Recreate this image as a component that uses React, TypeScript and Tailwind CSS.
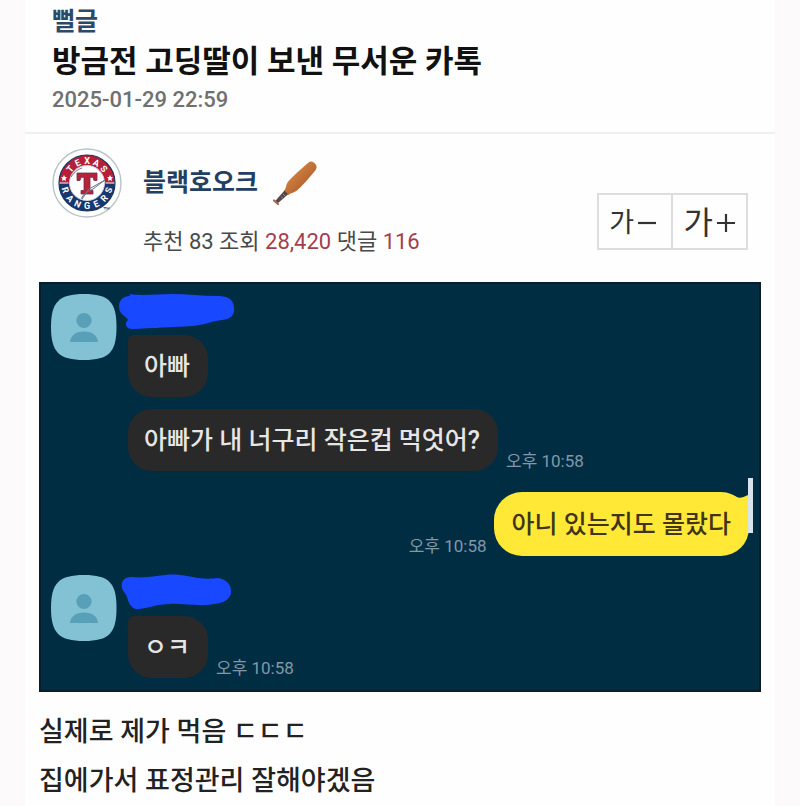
import { ReactNode } from "react";

// Start angle, angle between letters and baseline of each half of the ring
const ringText = [
	{ word: "TEXAS", from: -50, step: 25, y: 16 },
	{ word: "RANGERS", from: 72, step: -24, y: 61 },
];

const TeamLogo = () => (
	<svg viewBox="0 0 70 70" className="size-[70px]" aria-hidden="true">
		<circle cx="35" cy="35" r="34" fill="#fff" stroke="#b9c4c6" strokeWidth="1.4" />
		<path d="M7 35a28 28 0 0 1 56 0z" fill="#b71f38" />
		<path d="M7 35a28 28 0 0 0 56 0z" fill="#16386f" />
		<circle cx="35" cy="35" r="28" fill="none" stroke="#17335f" strokeWidth="1.2" />
		<circle cx="35" cy="35" r="17.5" fill="#fff" stroke="#cbd3df" strokeWidth="1" />
		<path d="M7.500 35h9M53.500 35h9" stroke="#fff" strokeWidth="1" />
		<path
			d="M12 27l1 2 2 .2-1.500 1.500.4 2.200-1.900-1-1.900 1 .4-2.200L9 29.200l2-.2zM58 27l1 2 2 .2-1.500 1.500.4 2.200-1.900-1-1.900 1 .4-2.200-1.500-1.500 2-.2z"
			fill="#fff"
		/>
		{ringText.map(({ word, from, step, y }) =>
			word.split("").map((letter, idx) => (
				<text
					key={`${word}_${idx}`}
					x="35"
					y={y}
					textAnchor="middle"
					fill="#fff"
					className="font-['Roboto',sans-serif] text-[9px] font-bold"
					transform={`rotate(${from + idx * step} 35 35)`}
				>
					{letter}
				</text>
			))
		)}
		<path
			d="M25 25h20v7.500h-3l-1-3.200h-3v13.200h3V46H29v-3.500h3V29.300h-3l-1 3.200h-3z"
			fill="#b3243b"
			stroke="#7c2744"
			strokeWidth=".8"
		/>
		<path
			d="M19 29c4-6 8-8 11-9M30 49l7-8 16-9-12 9-6 3-5 7z"
			fill="none"
			stroke="#65748a"
			strokeWidth="1"
		/>
		<path d="M51.500 59.500h3M53 59.500v2M55 61.500v-2l1 1 1-1v2" fill="none" stroke="#16386f" strokeWidth=".7" />
	</svg>
);

const Bat = () => (
	<svg viewBox="0 0 46 46" className="size-[46px]" aria-hidden="true">
		<defs>
			<linearGradient id="wood" x1="0" y1="0" x2="1" y2="1">
				<stop offset=".3" stopColor="#d08040" />
				<stop offset=".75" stopColor="#b0602c" />
			</linearGradient>
		</defs>
		<path
			d="M36 3c2-1.800 4-2 6-.3l1.500 1.500c1.600 1.800 1.400 4-.2 6.300C38 17 31 25 25 30.500c-2.500 2.200-6 2-8.500 4.500L12 31c2-2 1.700-5.500 3.500-8.500C20 17 30 8 36 3z"
			fill="url(#wood)"
		/>
		<path d="M12.500 30.500l3.700 3.700L5.500 43.500l-2.500-2.300z" fill="#574746" />
		<path d="M2 40.500l4 3.500" stroke="#a06c58" strokeWidth="2.200" strokeLinecap="round" />
		<path d="M11 34l2 2M9 36.500l2 2" stroke="#9d8584" strokeWidth="1" />
	</svg>
);

const Avatar = () => (
	<svg viewBox="0 0 68 68" className="size-[68px] shrink-0" aria-hidden="true">
		<path d="M34 1c25 0 32.500 8 32.500 33S59 67 34 67 1 59 1 34 9 1 34 1z" fill="#83c1d4" />
		<circle cx="34" cy="27.500" r="7.600" fill="#57a0b7" />
		<path d="M20 49c.5-6.500 6-10.500 14-10.500S47.500 42.500 48 49z" fill="#57a0b7" />
	</svg>
);

const Time = () => (
	<time className="text-[17px] leading-5 text-[#8198a9]">오후 10:58</time>
);

const Bubble = ({ first = false, children }: { first?: boolean; children: ReactNode }) => (
	<p
		className={`flex h-[62px] items-center rounded-3xl bg-[#292929] pt-[2px] pr-[18px] pl-4 text-[25px] font-medium text-[#e6e6e6] ${
			first ? "rounded-tl-md" : ""
		}`}
	>
		{children}
	</p>
);

const Incoming = ({ scribble, children }: { scribble: string; children: ReactNode }) => (
	<div className="flex items-start gap-[10px]">
		<Avatar />
		<div className="flex min-w-0 flex-col items-start">
			<svg viewBox="0 0 120 42" className="-ml-[10px] h-[42px] w-[120px]" aria-hidden="true">
				<path d={scribble} fill="#1848ff" />
			</svg>
			{children}
		</div>
	</div>
);

const App = () => (
	<div className="min-h-screen bg-[#fcfafb] px-[25px] font-['Roboto','Noto_Sans_CJK_KR',sans-serif]">
		<main className="min-h-screen bg-[#fefefe]">
			<header className="border-b-2 border-[#efefef] px-[27px] pt-[6px] pb-[18px]">
				<p className="text-[25px] leading-8 font-bold text-[#2d4967]">뻘글</p>
				<h1 className="text-[31px] leading-[48px] font-bold text-[#111111]">
					방금전 고딩딸이 보낸 무서운 카톡
				</h1>
				<time className="block text-[22px] leading-7 font-medium text-[#707070]">
					2025-01-29 22:59
				</time>
			</header>

			<section className="flex items-start px-[27px] pt-[14px]">
				<TeamLogo />
				<div className="ml-[21px] flex-1">
					<div className="flex h-[70px] items-center gap-[14px]">
						<a href="#author" className="text-[25px] font-bold text-[#233f63]">
							블랙호오크
						</a>
						<Bat />
					</div>
					<p className="mt-[10px] text-[22px] leading-7 text-[#494949]">
						추천 83 조회 <span className="text-[#a43e4c]">28,420</span> 댓글{" "}
						<span className="text-[#a43e4c]">116</span>
					</p>
				</div>
				<div className="mt-[45px] flex h-[57px] w-[151px] divide-x-2 divide-[#dddddd] border-2 border-[#dddddd] text-[#333333]">
					<button
						type="button"
						aria-label="글자 작게"
						className="flex w-1/2 items-center justify-center gap-1 pt-1 pr-1 text-[27px]"
					>
						가
						<svg viewBox="0 0 18 18" className="size-[18px]">
							<path d="M0 8h18" stroke="currentColor" strokeWidth="2.200" />
						</svg>
					</button>
					<button
						type="button"
						aria-label="글자 크게"
						className="flex w-1/2 items-center justify-center gap-1 pt-[2px] text-[32px]"
					>
						가
						<svg viewBox="0 0 18 18" className="size-[18px]">
							<path d="M0 9h18M9 0v18" stroke="currentColor" strokeWidth="2.200" />
						</svg>
					</button>
				</div>
			</section>

			<section className="mx-[14px] mt-[26px] border-2 border-[#091d2a] bg-[#012d43] px-[9px] pt-[9px] pb-3">
				<Incoming scribble="M12 3C4 3 1 8 1 14c0 7 7 9 9 13-4 3-2 9 4 9 20-1 42-2 60-3 13-1 20-5 30-6 9-1 13-5 12-13-1-9-8-11-17-11-14 0-30-2-46-2-14 0-29 2-41 0z">
					<Bubble first>아빠</Bubble>
					<div className="mt-3 flex items-end gap-2">
						<Bubble>아빠가 내 너구리 작은컵 먹엇어?</Bubble>
						<Time />
					</div>
				</Incoming>

				<div className="mt-[21px] mr-px flex items-end justify-end gap-[7px]">
					<Time />
					<p className="relative flex h-[64px] items-center rounded-[28px] bg-[#ffe936] px-[18px] pt-[2px] text-[25px] font-medium text-[#40351b]">
						아니 있는지도 몰랐다
						<svg
							viewBox="0 0 22 60"
							className="absolute -top-[14px] -right-[4px] h-[60px] w-[22px]"
							aria-hidden="true"
						>
							<path d="M2 17c5 4 9 3 15 0v28z" fill="#ffe936" />
							<path d="M17 0h5v55h-5z" fill="#dbe3ec" />
						</svg>
					</p>
				</div>

				<div className="mt-[18px]">
					<Incoming scribble="M12 3C5 4 3 8 4 14c1 4 4 5 5 9 2 8 6 13 12 12 11-1 18-5 30-5 14-1 31 3 45 0 10-1 16-5 17-11 1-9-6-14-13-15-17 2-22-1-38-3-17-2-28 4-50 2z">
						<div className="flex items-end gap-2">
							<Bubble first>ㅇㅋ</Bubble>
							<Time />
						</div>
					</Incoming>
				</div>
			</section>

			<article className="mx-[14px] pt-4 text-[27px] leading-[49px] font-medium text-[#222222]">
				<p>실제로 제가 먹음 ㄷㄷㄷ</p>
				<p>집에가서 표정관리 잘해야겠음</p>
			</article>
		</main>
	</div>
);

export default App;
